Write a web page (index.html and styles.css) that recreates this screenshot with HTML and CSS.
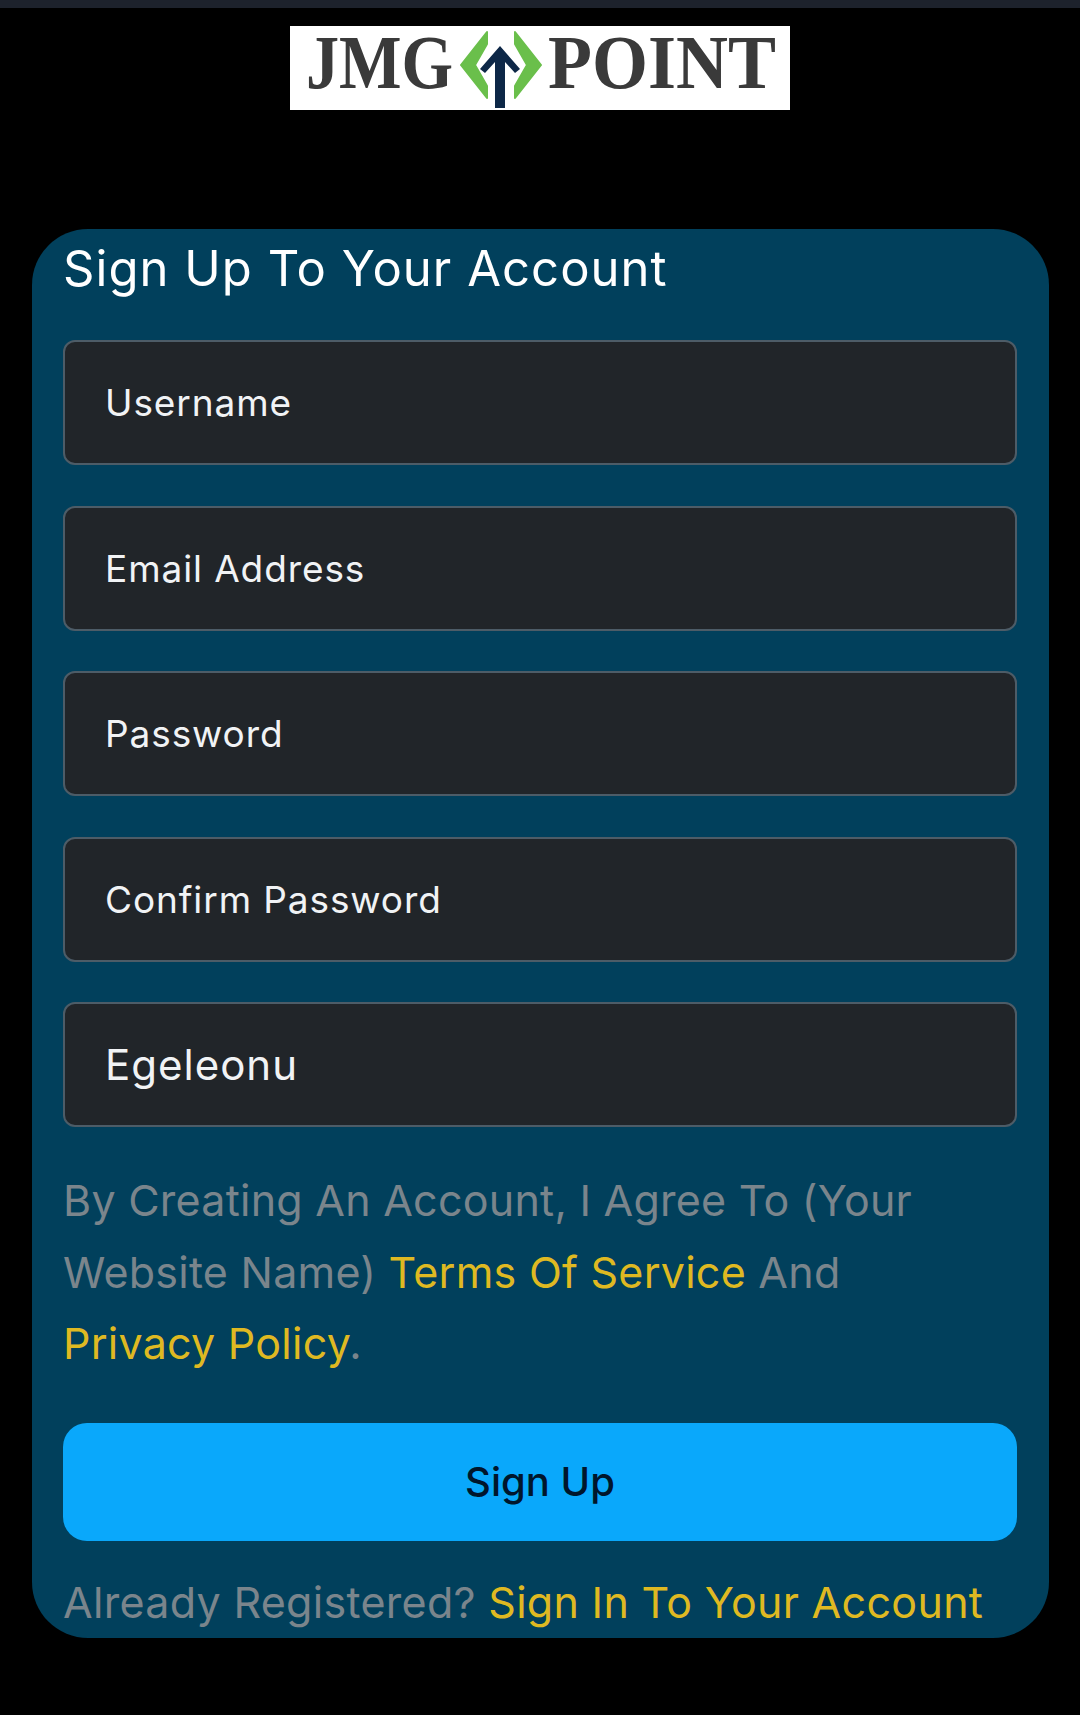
FILE: index.html
```html
<!DOCTYPE html>
<html lang="en">
<head>
    <meta charset="UTF-8">
    <meta name="viewport" content="width=device-width, initial-scale=1.0">
    <title>Sign Up</title>
    <link rel="stylesheet" href="styles.css">
</head>
<body>

    <div class="top-bar"></div>

    <div class="logo">
        <span class="logo-jmg">JMG</span>
        <svg class="logo-icon" viewBox="0 -5 82 84" width="82" height="84">
            <polygon fill="#6abf4b" stroke="#6abf4b" stroke-width="2" stroke-linejoin="round" points="27,1 1,34 27,67 27,55 15,34 27,13"/>
            <polygon fill="#6abf4b" stroke="#6abf4b" stroke-width="2" stroke-linejoin="round" points="55,1 81,34 55,67 55,55 67,34 55,13"/>
            <polygon fill="#0d2747" points="40,15 60,38 55,42 45,31 45,77 35,77 35,31 25,42 20,38"/>
        </svg>
        <span class="logo-point">POINT</span>
    </div>

    <div class="card">
        <h1>Sign Up To Your Account</h1>

        <form>
            <input class="field" type="text" placeholder="Username">
            <input class="field" type="email" placeholder="Email Address">
            <input class="field" type="password" placeholder="Password">
            <input class="field" type="password" placeholder="Confirm Password">
            <input class="field field-filled" type="text" value="Egeleonu">

            <p class="terms">
                By Creating An Account, I Agree To (Your<br>
                Website Name) <a href="#">Terms Of Service</a> And<br>
                <a href="#">Privacy Policy</a>.
            </p>

            <button type="button" class="btn">Sign Up</button>
        </form>

        <p class="signin">Already Registered? <a href="#">Sign In To Your Account</a></p>
    </div>

</body>
</html>
```

FILE: styles.css
```css
:root {
    --card: #01405c;
    --field: #212529;
    --field-border: #4d5c67;
    --muted: #7a858c;
    --link: #dfb922;
    --accent: #0aa8fb;
}

* {
    box-sizing: border-box;
}

html, body {
    height: 1715px;
    overflow: hidden;
}

body {
    margin: 0;
    background-color: #000;
    font-family: Inter, "Open Sans", sans-serif;
}

.top-bar {
    height: 8px;
    background-color: #1d222c;
}

.logo {
    display: flex;
    align-items: center;
    width: 500px;
    height: 84px;
    margin: 18px 0 0 290px;
    padding-left: 16px;
    background-color: #fff;
    color: #3a3a3a;
    font-family: "Liberation Serif", serif;
    font-size: 77px;
    font-weight: 700;
    line-height: 1;
}

.logo-jmg {
    display: inline-block;
    width: 146px;
    padding-bottom: 12px;
    transform: scaleX(0.86);
    transform-origin: left center;
    white-space: nowrap;
}

.logo-icon {
    margin: 0 6px 0 8px;
    flex-shrink: 0;
}

.logo-point {
    display: inline-block;
    padding-bottom: 12px;
    transform: scaleX(0.935);
    transform-origin: left center;
    white-space: nowrap;
}

.card {
    width: 1017px;
    height: 1409px;
    margin: 119px 0 0 32px;
    padding: 0 32px 0 31px;
    background-color: var(--card);
    border-radius: 56px;
    overflow: hidden;
}

h1 {
    margin: 0 0 33px;
    height: 78px;
    color: #fff;
    font-size: 49px;
    font-weight: 400;
    letter-spacing: 1.05px;
    line-height: 80px;
}

.field {
    display: block;
    width: 100%;
    height: 125px;
    margin-bottom: 40.5px;
    padding: 0 40px;
    border: 2px solid var(--field-border);
    border-radius: 12px;
    background-color: var(--field);
    color: #f1f3f5;
    font-family: inherit;
    font-size: 37px;
    letter-spacing: 0.9px;
}

.field::placeholder {
    color: #f1f3f5;
    opacity: 1;
}

.field-filled {
    margin-bottom: 38px;
    font-size: 42px;
    letter-spacing: 1px;
}

.terms {
    margin: 0 0 43px;
    color: var(--muted);
    font-size: 43px;
    letter-spacing: 0.25px;
    line-height: 71.5px;
}

.terms a, .signin a {
    color: var(--link);
    text-decoration: none;
}

.btn {
    display: block;
    width: 100%;
    height: 118px;
    border: none;
    border-radius: 24px;
    background-color: var(--accent);
    color: #00162c;
    font-family: inherit;
    font-size: 40px;
    font-weight: 500;
}

.signin {
    margin: 31px 0 0;
    color: var(--muted);
    font-size: 43px;
    letter-spacing: 0.3px;
    line-height: 60px;
    white-space: nowrap;
}
```
